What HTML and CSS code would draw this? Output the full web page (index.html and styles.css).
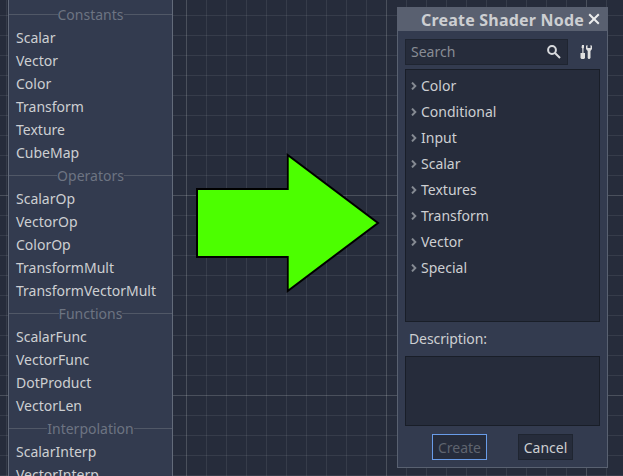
FILE: index.html
```
<!DOCTYPE html>
<html lang="en">
<head>
<meta charset="utf-8">
<title>Create Shader Node</title>
<link rel="stylesheet" href="styles.css">
</head>
<body>
<main class="canvas">
  <ul class="menu">
    <li class="heading"><span>Constants</span></li>
    <li>Scalar</li>
    <li>Vector</li>
    <li>Color</li>
    <li>Transform</li>
    <li>Texture</li>
    <li>CubeMap</li>
    <li class="heading"><span>Operators</span></li>
    <li>ScalarOp</li>
    <li>VectorOp</li>
    <li>ColorOp</li>
    <li>TransformMult</li>
    <li>TransformVectorMult</li>
    <li class="heading"><span>Functions</span></li>
    <li>ScalarFunc</li>
    <li>VectorFunc</li>
    <li>DotProduct</li>
    <li>VectorLen</li>
    <li class="heading"><span>Interpolation</span></li>
    <li>ScalarInterp</li>
    <li>VectorInterp</li>
  </ul>

  <svg class="arrow" width="186" height="142" viewBox="195 152 186 142">
    <path d="M197 189H287.700V155L378 223L287.700 291V257H197Z" fill="#4cff00" stroke="#000" stroke-width="2"/>
  </svg>

  <section class="dialog">
    <header class="titlebar">
      <h1>Create Shader Node</h1>
      <svg class="close" width="12" height="12" viewBox="0 0 12 12"><path d="M1.2 1.2L10.8 10.8M10.8 1.2L1.2 10.8" fill="none" stroke="#eceded" stroke-width="2"/></svg>
    </header>
    <div class="content">
      <div class="toolbar">
        <div class="search">
          <span>Search</span>
          <svg width="14" height="14" viewBox="0 0 14 14" fill="none" stroke="#d8dadd"><circle cx="5" cy="5" r="3.9" stroke-width="2"/><path d="M8 8L13 13" stroke-width="2"/></svg>
        </div>
        <svg class="tools" width="13" height="14" viewBox="0 0 13 14" fill="#e0e0e0"><path d="M2 0h2v2.500L3.500 3.500V8H5v5l-1 1H1.500L.5 13V8H2.300V3.500L1.500 2.500z"/><path d="M6 .8L7.500 0v3h3V0L12 .8V4L10.500 6v7L9.500 14h-1L7.700 13V6L6 4z"/></svg>
      </div>
      <ul class="tree">
        <li><svg width="6" height="8" viewBox="0 0 6 8"><path d="M1 .6L4.300 4L1 7.400"/></svg><span>Color</span></li>
        <li><svg width="6" height="8" viewBox="0 0 6 8"><path d="M1 .6L4.300 4L1 7.400"/></svg><span>Conditional</span></li>
        <li><svg width="6" height="8" viewBox="0 0 6 8"><path d="M1 .6L4.300 4L1 7.400"/></svg><span>Input</span></li>
        <li><svg width="6" height="8" viewBox="0 0 6 8"><path d="M1 .6L4.300 4L1 7.400"/></svg><span>Scalar</span></li>
        <li><svg width="6" height="8" viewBox="0 0 6 8"><path d="M1 .6L4.300 4L1 7.400"/></svg><span>Textures</span></li>
        <li><svg width="6" height="8" viewBox="0 0 6 8"><path d="M1 .6L4.300 4L1 7.400"/></svg><span>Transform</span></li>
        <li><svg width="6" height="8" viewBox="0 0 6 8"><path d="M1 .6L4.300 4L1 7.400"/></svg><span>Vector</span></li>
        <li><svg width="6" height="8" viewBox="0 0 6 8"><path d="M1 .6L4.300 4L1 7.400"/></svg><span>Special</span></li>
      </ul>
      <p class="label">Description:</p>
      <div class="description"></div>
      <footer class="actions">
        <button class="button create" type="button">Create</button>
        <button class="button" type="button">Cancel</button>
      </footer>
    </div>
  </section>
</main>
</body>
</html>
```
FILE: styles.css
```
* {
  box-sizing: border-box;
}

body {
  margin: 0;
  font: 14px/23px "Noto Sans", sans-serif;
  color: #cdcfd2;
}

ul, h1, p {
  margin: 0;
  padding: 0;
  list-style: none;
}

svg {
  display: block;
  flex: none;
}

.canvas {
  position: relative;
  width: 623px;
  height: 476px;
  overflow: hidden;
  background-color: #262c3b;
  background-image:
    linear-gradient(90deg, rgba(255, 255, 255, .1) 1px, transparent 1px),
    linear-gradient(rgba(255, 255, 255, .1) 1px, transparent 1px),
    linear-gradient(90deg, rgba(255, 255, 255, .075) 1px, transparent 1px),
    linear-gradient(rgba(255, 255, 255, .075) 1px, transparent 1px);
  background-size: 200px 200px, 200px 200px, 20px 20px, 20px 20px;
  background-position: 186px 0, 0 195px, 6px 0, 0 15px;
}

.menu {
  position: absolute;
  left: 8px;
  top: -8px;
  width: 165px;
  padding-top: 10px;
  background: #333b4f;
  border: 1px solid #636b7a;
}

.menu li {
  height: 23px;
  padding-left: 7px;
  white-space: nowrap;
}

.menu .heading {
  display: flex;
  align-items: flex-start;
  padding: 0;
  color: #6d7482;
}

.heading::before,
.heading::after {
  content: "";
  flex: 1;
  height: 1px;
  margin-top: 11px;
  background: #515867;
}

.arrow {
  position: absolute;
  left: 195px;
  top: 152px;
}

.dialog {
  position: absolute;
  left: 397px;
  top: 7px;
  width: 211px;
  height: 461px;
  background: #333b4f;
  border: 1px solid #596171;
  border-top: 0;
}

.titlebar {
  display: flex;
  align-items: center;
  justify-content: flex-end;
  gap: 4px;
  height: 24px;
  margin: 0 -1px;
  padding-right: 8px;
  background: #596070;
}

.titlebar h1 {
  padding-top: 2px;
  font-size: 16px;
  line-height: 24px;
  font-weight: 700;
  letter-spacing: .2px;
  white-space: nowrap;
}

.content {
  padding: 8px 7px 0;
}

.toolbar {
  display: flex;
  align-items: center;
  gap: 12px;
  height: 26px;
  margin-bottom: 4px;
}

.search {
  display: flex;
  align-items: center;
  justify-content: space-between;
  width: 163px;
  height: 26px;
  padding: 0 6px 0 5px;
  background: #262c3b;
  border: 1px solid #1f2531;
  color: #888c95;
}

.search span,
.tree span {
  padding-bottom: 2px;
}

.tree {
  width: 195px;
  height: 253px;
  padding-top: 3px;
  background: #262c3b;
  border: 1px solid #191e28;
}

.tree li {
  display: flex;
  align-items: center;
  gap: 4px;
  height: 26px;
  padding-left: 5px;
}

.tree path {
  fill: none;
  stroke: #858a92;
  stroke-width: 2;
}

.label {
  height: 34px;
  padding: 5px 0 0 4px;
  letter-spacing: -.1px;
}

.description {
  width: 195px;
  height: 70px;
  background: #262c3b;
  border: 1px solid #191e28;
}

.actions {
  display: flex;
  gap: 31px;
  padding: 8px 0 0 27px;
}

.button {
  width: 55px;
  height: 26px;
  padding: 0;
  font: inherit;
  color: #cdcfd2;
  background: #262c3b;
  border: 1px solid #1f2531;
}

.create {
  color: #5f646f;
  border-color: #699ce8;
}
```
